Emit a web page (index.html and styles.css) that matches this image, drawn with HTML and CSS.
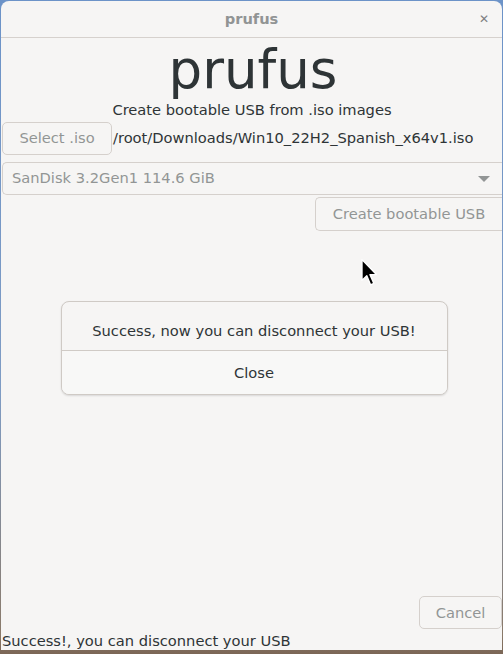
FILE: index.html
```html
<!DOCTYPE html>
<html>
<head>
<meta charset="utf-8">
<link rel="stylesheet" href="styles.css">
</head>
<body>
<div class="window">
  <div class="titlebar">
    <span class="title">prufus</span>
    <span class="close">&#x2715;</span>
  </div>
  <div class="content">
    <div class="logo">prufus</div>
    <div class="subtitle">Create bootable USB from .iso images</div>
    <div class="iso-row">
      <button class="btn select">Select .iso</button>
      <span class="path">/root/Downloads/Win10_22H2_Spanish_x64v1.iso</span>
    </div>
    <div class="combo">
      <span>SanDisk 3.2Gen1 114.6 GiB</span>
      <span class="arrow"></span>
    </div>
    <div class="create-row">
      <button class="btn create">Create bootable USB</button>
    </div>
    <div class="dialog-area">
      <div class="dialog">
        <div class="msg">Success, now you can disconnect your USB!</div>
        <div class="dlg-btn">Close</div>
      </div>
    </div>
    <div class="spacer"></div>
    <div class="cancel-row">
      <button class="btn cancel">Cancel</button>
    </div>
    <div class="status">Success!, you can disconnect your USB</div>
  </div>
  <svg class="cursor" width="20" height="30" viewBox="0 0 18 28">
    <path d="M1.5 1.5 L1.5 21 L6 16.5 L9.5 25 L12.5 23.6 L9 15.5 L15 15.5 Z" fill="#000" stroke="#fff" stroke-width="1.3" stroke-linejoin="round"/>
  </svg>
</div>
</body>
</html>
```
FILE: styles.css
```css
html, body {
  margin: 0;
  padding: 0;
}
body {
  width: 503px;
  height: 654px;
  overflow: hidden;
  background: linear-gradient(180deg, #6c93c8 0%, #7f9cc4 60%, #8a7a6a 97%, #7b6656 100%);
  padding: 1px 1px 0 1px;
  box-sizing: border-box;
  font-family: "DejaVu Sans", sans-serif;
  color: #2e3436;
}
.window {
  position: relative;
  width: 501px;
  height: 649px;
  background: #f6f5f4;
  border-radius: 8px 8px 0 0;
  display: flex;
  flex-direction: column;
  overflow: hidden;
}
.titlebar {
  height: 36px;
  border-bottom: 1px solid #d6d1cd;
  display: flex;
  align-items: center;
  justify-content: center;
  position: relative;
  flex: none;
}
.title {
  font-size: 14.67px;
  font-weight: bold;
  color: #919494;
  padding-bottom: 2px;
}
.close {
  position: absolute;
  right: 13px;
  top: 11px;
  font-size: 12px;
  font-weight: bold;
  color: #7d8080;
}
.content {
  flex: 1;
  display: flex;
  flex-direction: column;
  padding-left: 1px;
}
.logo {
  font-size: 53px;
  text-align: center;
  margin-top: 1px;
  line-height: 62px;
  padding-left: 2px;
}
.subtitle {
  font-size: 14.67px;
  text-align: center;
  line-height: 17px;
}
.btn {
  font-family: "DejaVu Sans", sans-serif;
  font-size: 14.67px;
  color: #929595;
  background: #f6f5f4;
  border: 1px solid #d5d0cc;
  border-radius: 5px;
  padding: 0 0 2px 0;
  box-sizing: border-box;
}
.iso-row {
  display: flex;
  align-items: center;
  margin-top: 4px;
}
.select {
  width: 110px;
  height: 33px;
}
.path {
  font-size: 14.67px;
  margin-left: 1px;
  padding-bottom: 2px;
}
.combo {
  margin-top: 7px;
  height: 33px;
  border: 1px solid #d5d0cc;
  border-right: none;
  border-radius: 5px 0 0 5px;
  box-sizing: border-box;
  display: flex;
  align-items: center;
  justify-content: space-between;
  padding: 0 12px 2px 9px;
  font-size: 14.67px;
  color: #929595;
}
.arrow {
  width: 0;
  height: 0;
  border-left: 6px solid transparent;
  border-right: 6px solid transparent;
  border-top: 6px solid #929595;
  margin-top: 2px;
}
.create-row {
  display: flex;
  justify-content: flex-end;
  margin-top: 2px;
}
.create {
  width: 187px;
  height: 34px;
  border-right: none;
  border-radius: 5px 0 0 5px;
}
.dialog-area {
  display: flex;
  justify-content: center;
  margin-top: 70px;
  padding-left: 4px;
}
.dialog {
  width: 385px;
  border: 1px solid #cfcac5;
  border-radius: 8px;
  box-shadow: 0 1px 2px rgba(0,0,0,0.12);
  background: #f6f5f4;
  overflow: hidden;
}
.msg {
  height: 49px;
  display: flex;
  align-items: center;
  justify-content: center;
  font-size: 14.67px;
  border-bottom: 1px solid #d0cbc6;
  padding-top: 8px;
  box-sizing: border-box;
}
.dlg-btn {
  height: 43px;
  display: flex;
  align-items: center;
  justify-content: center;
  font-size: 14.67px;
  background: #f8f8f7;
  padding-bottom: 1px;
  box-sizing: border-box;
}
.spacer {
  flex: 1;
}
.cancel-row {
  display: flex;
  justify-content: flex-end;
}
.cancel {
  width: 83px;
  height: 33px;
  padding-bottom: 0;
}
.status {
  font-size: 14.67px;
  line-height: 18px;
  margin-top: 2px;
  padding-top: 1px;
}
.cursor {
  position: absolute;
  left: 359px;
  top: 257px;
}
```
